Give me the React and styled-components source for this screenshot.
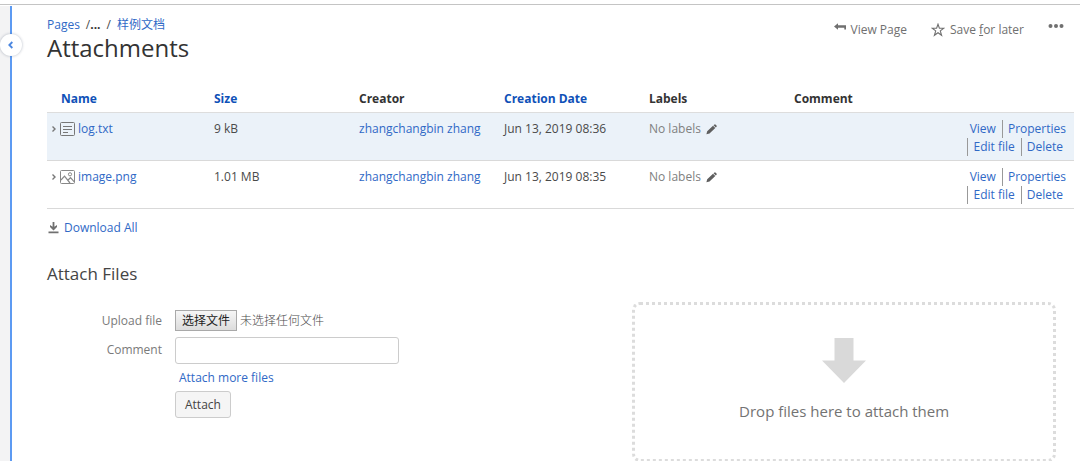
import React, { useRef, useState } from 'react';
import styled, { createGlobalStyle } from 'styled-components';

const attachments = [
  {
    name: 'log.txt',
    type: 'text',
    size: '9 kB',
    creator: 'zhangchangbin zhang',
    date: 'Jun 13, 2019 08:36',
    active: true,
  },
  {
    name: 'image.png',
    type: 'image',
    size: '1.01 MB',
    creator: 'zhangchangbin zhang',
    date: 'Jun 13, 2019 08:35',
    active: false,
  },
];

const actions = ['View', 'Properties', 'Edit file', 'Delete'];

export default function App() {
  return (
    <>
      <GlobalStyle />
      <Page>
        <TopBar />
        <Body>
          <Sidebar>
            <Toggle type="button" aria-label="Expand sidebar">
              <ChevronIcon left size={10} />
            </Toggle>
          </Sidebar>
          <Main>
            <PageHeader />
            <AttachmentTable />
            <DownloadAll href="#">
              <DownloadIcon />
              Download All
            </DownloadAll>
            <SectionTitle>Attach Files</SectionTitle>
            <AttachSection>
              <AttachForm />
              <DropZone>
                <DropArrow />
                <DropText>Drop files here to attach them</DropText>
              </DropZone>
            </AttachSection>
          </Main>
        </Body>
      </Page>
    </>
  );
}

function PageHeader() {
  return (
    <Header>
      <div>
        <Breadcrumbs aria-label="Breadcrumb">
          <Link href="#">Pages</Link>
          <span>
            /<Ellipsis>...</Ellipsis>
          </span>
          <span>/</span>
          <Link href="#">样例文档</Link>
        </Breadcrumbs>
        <Title>Attachments</Title>
      </div>
      <Toolbar>
        <ToolButton type="button">
          <BackIcon />
          <span>View Page</span>
        </ToolButton>
        <ToolButton type="button">
          <StarIcon />
          <span>
            Save <u>f</u>or later
          </span>
        </ToolButton>
        <ToolButton type="button" aria-label="More">
          <MoreIcon />
        </ToolButton>
      </Toolbar>
    </Header>
  );
}

function AttachmentTable() {
  return (
    <Table>
      <colgroup>
        <NameCol />
        <col />
        <col />
        <col />
        <col />
        <col />
        <col />
      </colgroup>
      <thead>
        <tr>
          <Th $name>
            <SortLink href="#">Name</SortLink>
          </Th>
          <Th>
            <SortLink href="#">Size</SortLink>
          </Th>
          <Th>Creator</Th>
          <Th>
            <SortLink href="#">Creation Date</SortLink>
          </Th>
          <Th>Labels</Th>
          <Th>Comment</Th>
          <Th />
        </tr>
      </thead>
      <tbody>
        {attachments.map((file) => (
          <Row key={file.name} $active={file.active}>
            <Td $tight>
              <FileName>
                <ChevronIcon size={6} />
                {file.type === 'text' ? <TextFileIcon /> : <ImageFileIcon />}
                <Link href="#">{file.name}</Link>
              </FileName>
            </Td>
            <Td>{file.size}</Td>
            <Td>
              <Link href="#">{file.creator}</Link>
            </Td>
            <Td>{file.date}</Td>
            <Td>
              <Labels>
                No labels
                <EditButton type="button" aria-label="Edit labels">
                  <PencilIcon />
                </EditButton>
              </Labels>
            </Td>
            <Td />
            <Td $tight>
              <Actions>
                {actions.map((action) => (
                  <Action key={action}>
                    <Link href="#">{action}</Link>
                  </Action>
                ))}
              </Actions>
            </Td>
          </Row>
        ))}
      </tbody>
    </Table>
  );
}

function AttachForm() {
  const fileRef = useRef(null);
  const [fileName, setFileName] = useState('');

  return (
    <Form onSubmit={(e) => e.preventDefault()}>
      <Label htmlFor="file">Upload file</Label>
      <FileField>
        <HiddenFile
          id="file"
          type="file"
          ref={fileRef}
          tabIndex={-1}
          onChange={(e) => setFileName(e.target.files[0]?.name || '')}
        />
        <FileButton type="button" onClick={() => fileRef.current.click()}>
          选择文件
        </FileButton>
        <FileStatus>{fileName || '未选择任何文件'}</FileStatus>
      </FileField>
      <Label htmlFor="comment">Comment</Label>
      <TextInput id="comment" type="text" />
      <MoreLink href="#">Attach more files</MoreLink>
      <SubmitButton type="submit">Attach</SubmitButton>
    </Form>
  );
}

// ======================== Icons ========================
function ChevronIcon({ left, size }) {
  return (
    <svg width={size} height={size} viewBox="0 0 6 6" fill="none" stroke={left ? '#4a86e0' : '#777'} strokeWidth={left ? 1.1 : 1.4}>
      <path d={left ? 'M3.8 1.2 2 3l1.8 1.8' : 'M1.5.5 4 3 1.5 5.5'} />
    </svg>
  );
}

function BackIcon() {
  return (
    <svg width="12" height="8" viewBox="0 0 12 8" fill="#707070">
      <path d="M0 3.500 4 .3v1.900h8v4.300h-1.700V4.800H4v1.900z" />
    </svg>
  );
}

function StarIcon() {
  return (
    <svg width="14" height="14" viewBox="0 0 14 14" fill="none" stroke="#707070" strokeWidth="1.1">
      <path d="M7 1.200 8.400 5.300h4.400L9.300 7.900l1.300 4.400L7 9.700l-3.600 2.600 1.300-4.400L1.200 5.300h4.400z" />
    </svg>
  );
}

function MoreIcon() {
  return (
    <svg width="16" height="6" viewBox="0 0 16 6" fill="#707070">
      <circle cx="2.5" cy="3" r="2" />
      <circle cx="8" cy="3" r="2" />
      <circle cx="13.5" cy="3" r="2" />
    </svg>
  );
}

function TextFileIcon() {
  return (
    <svg width="15" height="15" viewBox="0 0 15 15" fill="none" stroke="#777">
      <rect x=".5" y=".5" width="14" height="13" rx="1" />
      <path d="M3 4.500h9M3 7.500h9M3 10.500h5" />
    </svg>
  );
}

function ImageFileIcon() {
  return (
    <svg width="15" height="15" viewBox="0 0 15 15" fill="none" stroke="#888">
      <rect x=".5" y=".5" width="14" height="13" rx="1" />
      <circle cx="10" cy="4.300" r="1.600" />
      <path d="M1 10 4.500 6.200 10 13M7.800 10.200 10.500 7.700l4 4.500" strokeWidth="1.2" />
    </svg>
  );
}

function PencilIcon() {
  return (
    <svg width="11" height="11" viewBox="0 0 11 11" fill="#5f5f5f">
      <path d="M.4 10.200 1.200 7.200 7 1.800l2.300 2.300L3.500 9.500zM7.500 1.300 8.300.6c.4-.3.9-.3 1.200 0l1 1c.4.4.4.9 0 1.200l-.7.8z" />
    </svg>
  );
}

function DownloadIcon() {
  return (
    <svg width="11" height="12" viewBox="0 0 11 12" fill="#707070">
      <path d="M4.600 0h1.800v4.800L9 2.900v2.200L5.500 8.400 2 5.100V2.900l2.600 1.900zM.5 9.500h10v1.700H.5z" />
    </svg>
  );
}

function DropArrow() {
  return (
    <svg width="44" height="45" viewBox="0 0 44 45" fill="#d9d9d9">
      <path d="M12.500 0h19v22.500H44L22 45 0 22.500h12.500z" />
    </svg>
  );
}

// ======================== Styled Components ========================
const GlobalStyle = createGlobalStyle`
  * {
    box-sizing: border-box;
  }

  body {
    margin: 0;
    background: #fff;
    color: #4a4a4a;
    font-family: 'Open Sans', 'Noto Sans CJK SC', sans-serif;
    font-size: 12px;
    line-height: 18px;
  }

  button,
  input {
    font: inherit;
  }

  svg {
    flex-shrink: 0;
  }
`;

const Page = styled.div`
  display: flex;
  flex-direction: column;
  height: 100vh;
  overflow: hidden;
`;

const TopBar = styled.div`
  flex: 0 0 5px;
  border-bottom: 1px solid #c4c4c4;
`;

const Body = styled.div`
  display: flex;
  flex: 1;
  min-height: 0;
`;

const Sidebar = styled.aside`
  position: relative;
  flex: 0 0 12px;
  margin-top: 1px;
  background: #f3f3f4;
  border-right: 2px solid #5c9af2;
`;

const Toggle = styled.button`
  position: absolute;
  top: 28px;
  left: 0;
  display: flex;
  align-items: center;
  justify-content: center;
  width: 22px;
  height: 22px;
  padding: 0;
  border: 0;
  border-radius: 50%;
  background: #fff;
  box-shadow: 0 0 3px rgba(9, 30, 66, 0.3);
  cursor: pointer;
`;

const Main = styled.main`
  flex: 1;
  min-width: 0;
  padding: 11px 6px 0 35px;
`;

const Link = styled.a`
  color: #3069c6;
  text-decoration: none;

  &:hover {
    text-decoration: underline;
  }
`;

const Header = styled.header`
  display: flex;
  justify-content: space-between;
  align-items: flex-start;
`;

const Breadcrumbs = styled.nav`
  display: flex;
  gap: 6px;
`;

const Ellipsis = styled.b`
  color: #333;
`;

const Title = styled.h1`
  margin: 0;
  color: #333;
  font-size: 24px;
  font-weight: 400;
  line-height: 28px;
`;

const Toolbar = styled.div`
  display: flex;
  gap: 24px;
  padding: 5px 10px 0 0;
`;

const ToolButton = styled.button`
  display: flex;
  align-items: flex-start;
  gap: 5px;
  padding: 0;
  border: 0;
  background: none;
  color: #707070;
  cursor: pointer;

  svg {
    margin-top: 2px;
  }
`;

const Table = styled.table`
  width: 100%;
  margin-top: 28px;
  border-collapse: collapse;
  table-layout: fixed;
`;

const NameCol = styled.col`
  width: 157px;
`;

const Th = styled.th`
  padding: 0 10px 4px ${(props) => (props.$name ? '14px' : '10px')};
  border-bottom: 1px solid #ddd;
  color: #333;
  font-weight: 700;
  text-align: left;
`;

const SortLink = styled(Link)`
  color: #0f51b8;
`;

const Row = styled.tr`
  background: ${(props) => (props.$active ? '#ebf2f9' : '#fff')};
`;

const Td = styled.td`
  padding: ${(props) => (props.$tight ? '7px 8px 4px 4px' : '7px 10px 4px')};
  border-bottom: 1px solid #d9d9d9;
  vertical-align: top;
  white-space: nowrap;
`;

const FileName = styled.div`
  display: flex;
  align-items: center;
  gap: 3px;
`;

const Labels = styled.div`
  display: flex;
  align-items: center;
  gap: 5px;
  color: #808080;
`;

const EditButton = styled.button`
  display: flex;
  padding: 0;
  border: 0;
  background: none;
  cursor: pointer;
`;

const Actions = styled.ul`
  display: flex;
  flex-wrap: wrap;
  justify-content: flex-end;
  column-gap: 6px;
  margin: 0;
  padding: 0;
  list-style: none;
`;

const Action = styled.li`
  & + & {
    padding-left: 5px;
    border-left: 1px solid #999;
  }

  &:last-child {
    padding-right: 3px;
  }
`;

const DownloadAll = styled(Link)`
  display: inline-flex;
  align-items: center;
  gap: 5px;
  margin: 10px 0 0 1px;
`;

const SectionTitle = styled.h2`
  margin: 23px 0 0;
  color: #444;
  font-size: 17px;
  font-weight: 400;
  line-height: 24px;
`;

const AttachSection = styled.section`
  display: flex;
  align-items: flex-start;
  justify-content: space-between;
  padding: 16px 18px 0 0;
`;

const Form = styled.form`
  display: grid;
  grid-template-columns: 115px 224px;
  column-gap: 13px;
  align-items: center;
  padding-top: 8px;
`;

const Label = styled.label`
  color: #7a7a7a;
  text-align: right;
`;

const FileField = styled.div`
  position: relative;
  display: flex;
  align-items: center;
  gap: 3px;
`;

const HiddenFile = styled.input`
  position: absolute;
  width: 1px;
  height: 1px;
  opacity: 0;
`;

const FileButton = styled.button`
  height: 21px;
  padding: 0 6px;
  border: 1px solid #a9a9a9;
  background: linear-gradient(#f6f6f6, #dcdcdc);
  color: #222;
  line-height: 18px;
`;

const FileStatus = styled.span`
  font-weight: 300;
`;

const TextInput = styled.input`
  width: 100%;
  height: 27px;
  margin: 6px 0 5px;
  padding: 0 6px;
  border: 1px solid #ccc;
  border-radius: 3px;
  color: #333;
`;

const MoreLink = styled(Link)`
  grid-column: 2;
  margin-left: 4px;
`;

const SubmitButton = styled.button`
  grid-column: 2;
  justify-self: start;
  height: 27px;
  margin-top: 4px;
  padding: 0 9px;
  border: 1px solid #ccc;
  border-radius: 3px;
  background: #f5f5f5;
  color: #444;
  cursor: pointer;
`;

const DropZone = styled.div`
  display: flex;
  flex: 0 0 42%;
  flex-direction: column;
  align-items: center;
  height: 160px;
  padding-top: 33px;
  border: 3px dotted #dcdcdc;
  border-radius: 8px;
`;

const DropText = styled.p`
  margin: 16px 0 0;
  color: #737373;
  font-size: 15px;
  line-height: 24px;
`;
